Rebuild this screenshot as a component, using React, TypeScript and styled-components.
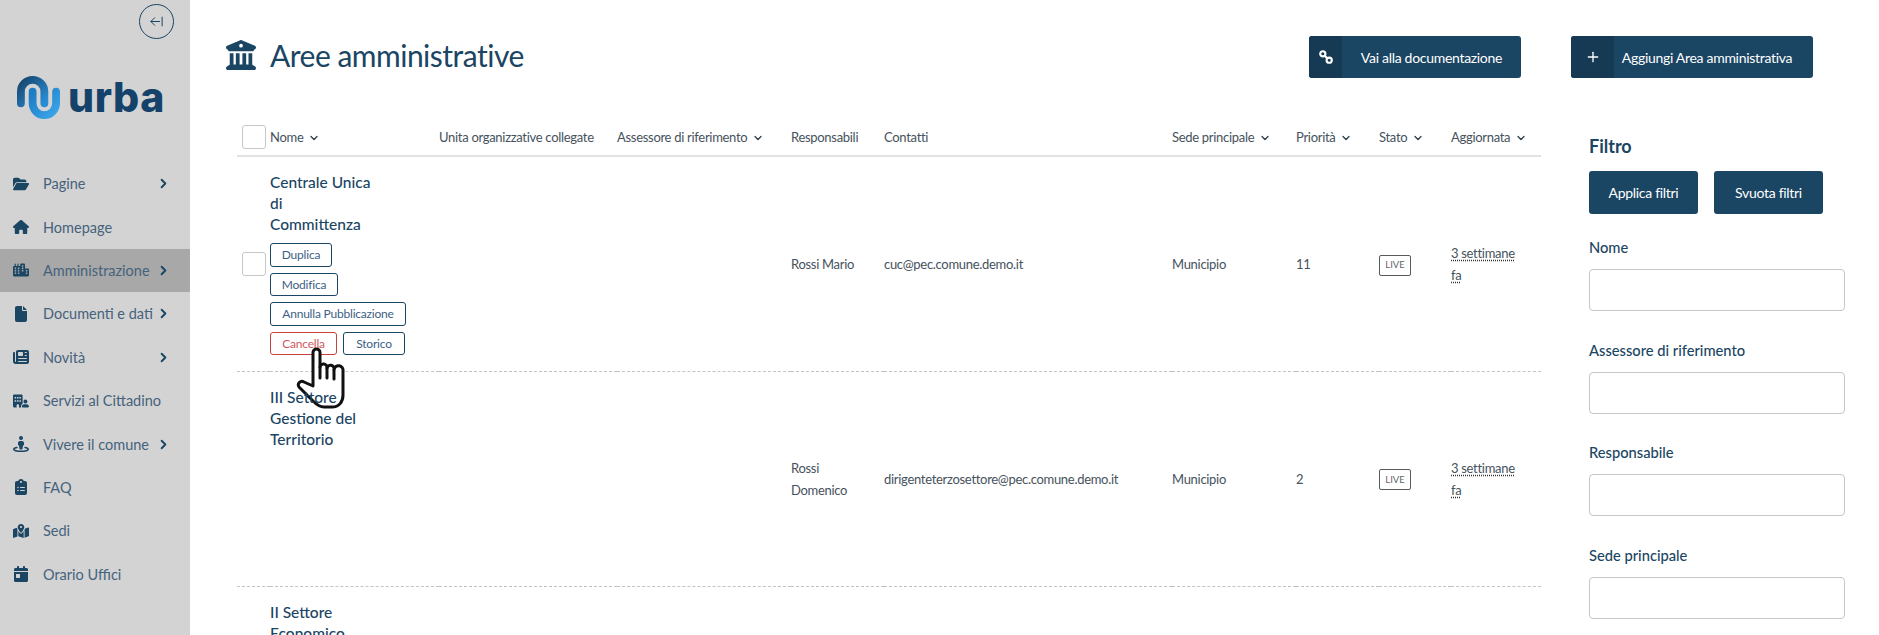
import React from "react";
import styled, { createGlobalStyle } from "styled-components";
import { ArrowLeftFromLine, ChevronDown, ChevronRight, Plus } from "lucide-react";
import {
  FaBuildingColumns,
  FaBuildingUser,
  FaCalendarDay,
  FaCity,
  FaClipboardList,
  FaFile,
  FaFolderOpen,
  FaHouse,
  FaMapLocationDot,
  FaNewspaper,
  FaStreetView,
} from "react-icons/fa6";

const NAVY = "#1a4563";
const DARK_NAVY = "#163a54";
const BODY_TEXT = "#46525c";

const GlobalStyle = createGlobalStyle`
  html, body {
    margin: 0;
    padding: 0;
    height: 635px;
    overflow: hidden;
    background: #fff;
    font-family: "Lato", "Open Sans", sans-serif;
  }
  * { box-sizing: border-box; }
`;

const Page = styled.div`
  display: flex;
  width: 1879px;
  height: 635px;
  overflow: hidden;
  position: relative;
`;

const Sidebar = styled.aside`
  width: 190px;
  flex: none;
  display: flex;
  flex-direction: column;
  background: #d3d3d3;
`;

const CollapseButton = styled.button`
  width: 35px;
  height: 35px;
  margin: 4px 16px 0 auto;
  padding: 0;
  display: flex;
  align-items: center;
  justify-content: center;
  background: transparent;
  border: 1px solid ${NAVY};
  border-radius: 50%;
  color: ${NAVY};
`;

const Logo = styled.div`
  display: flex;
  align-items: center;
  gap: 8px;
  margin: 37px 0 0 17px;
  height: 43px;
`;

const LogoText = styled.span`
  font-family: "Inter", sans-serif;
  font-size: 41px;
  font-weight: 800;
  color: #14426a;
  letter-spacing: 0.6px;
  line-height: 1;
`;

const Menu = styled.nav`
  margin-top: 43px;
  display: flex;
  flex-direction: column;
`;

const MenuItem = styled.a<{ $active?: boolean }>`
  height: 43.4px;
  display: flex;
  align-items: center;
  padding: 0 19px 0 13px;
  font-size: 14.5px;
  color: #45627c;
  background: ${(p) => (p.$active ? "#a8a8a8" : "transparent")};
`;

const MenuIcon = styled.span`
  width: 30px;
  flex: none;
  display: flex;
  color: ${NAVY};
  font-size: 16px;
`;

const MenuLabel = styled.span`
  flex: 1;
  white-space: nowrap;
`;

const MenuChevron = styled(ChevronRight)`
  color: ${NAVY};
`;

const Main = styled.main`
  flex: 1;
  min-width: 0;
  display: flex;
  flex-direction: column;
`;

const Header = styled.header`
  display: flex;
  align-items: center;
  height: 42px;
  margin-top: 36px;
  padding-left: 36px;
`;

const PageTitle = styled.h1`
  display: flex;
  align-items: center;
  gap: 14px;
  margin: 0;
  padding-bottom: 4px;
  font-size: 30px;
  font-weight: 400;
  letter-spacing: -0.5px;
  color: ${NAVY};
  flex: 1;
`;

const HeaderActions = styled.div`
  display: flex;
  gap: 50px;
  margin-right: 66px;
`;

const IconButton = styled.button`
  height: 42px;
  padding: 0;
  display: flex;
  align-items: stretch;
  background: ${NAVY};
  border: 0;
  border-radius: 3px;
  overflow: hidden;
  color: #fff;
  font: inherit;
  font-size: 14px;
  letter-spacing: -0.3px;
`;

const ButtonIcon = styled.span<{ $width: number }>`
  width: ${(p) => p.$width}px;
  display: flex;
  align-items: center;
  justify-content: center;
  background: ${DARK_NAVY};
`;

const ButtonLabel = styled.span<{ $width: number; $inset?: number }>`
  width: ${(p) => p.$width}px;
  padding-right: ${(p) => p.$inset ?? 0}px;
  display: flex;
  align-items: center;
  justify-content: center;
  white-space: nowrap;
`;

const Content = styled.div`
  display: flex;
  gap: 48px;
  padding-left: 47px;
  margin-top: 40px;
`;

const Table = styled.table`
  width: 1304px;
  flex: none;
  table-layout: fixed;
  border-collapse: collapse;
  font-size: 13px;
  letter-spacing: -0.3px;
  color: ${BODY_TEXT};
`;

const Col = styled.col<{ $width: number }>`
  width: ${(p) => p.$width}px;
`;

const Th = styled.th`
  height: 38px;
  padding: 0;
  font-weight: 400;
  text-align: left;
  white-space: nowrap;
  border-bottom: 2px solid #e2e2e2;
`;

const SortIcon = styled(ChevronDown)`
  margin-left: 5px;
  vertical-align: -2px;
  color: #2c3a44;
`;

const Row = styled.tr`
  height: 215px;
  border-bottom: 1px dashed #c4c4c4;
`;

const Td = styled.td<{ $inset?: number }>`
  padding: 0 ${(p) => p.$inset ?? 0}px 0 0;
  line-height: 22px;
`;

const NameCell = styled.td`
  padding: 15px 0 0;
  vertical-align: top;
`;

const CheckBox = styled.span`
  display: block;
  width: 24px;
  height: 24px;
  margin-left: 5px;
  background: #fff;
  border: 1px solid #c6c6c6;
  border-radius: 3px;
`;

/* sits above the hand cursor: the row title shows through it in the screenshot */
const AreaName = styled.div`
  position: relative;
  z-index: 2;
  width: 110px;
  font-size: 15.5px;
  font-weight: 500;
  letter-spacing: 0;
  line-height: 21px;
  color: ${NAVY};
`;

const Actions = styled.div`
  width: 135px;
  margin-top: 8px;
  display: flex;
  flex-wrap: wrap;
  gap: 6px;
`;

const ActionButton = styled.button<{ $danger?: boolean; $width: number }>`
  width: ${(p) => p.$width}px;
  height: 23.6px;
  flex: none;
  padding: 0;
  background: #fff;
  border: 1px solid ${(p) => (p.$danger ? "#c9403f" : NAVY)};
  border-radius: 3px;
  color: ${(p) => (p.$danger ? "#d0575d" : "#3e5f85")};
  font: inherit;
  font-size: 12px;
  letter-spacing: -0.2px;
  white-space: nowrap;
`;

const LiveBadge = styled.span`
  display: inline-flex;
  align-items: center;
  justify-content: center;
  width: 32px;
  height: 21px;
  border: 1px solid #5a5a5a;
  border-radius: 2px;
  font-size: 9.5px;
  letter-spacing: 0;
  color: #666;
`;

const TimeAgo = styled.abbr`
  text-decoration: underline dotted #333;
  text-underline-offset: 2px;
`;

const FilterPanel = styled.aside`
  width: 256px;
  flex: none;
  margin-top: 16px;
  color: ${NAVY};
`;

const FilterTitle = styled.h2`
  margin: 0;
  font-size: 18px;
  font-weight: 700;
  line-height: 24px;
`;

const FilterButtons = styled.div`
  display: flex;
  gap: 16px;
  margin-top: 13px;
`;

const FilterButton = styled.button`
  width: 109px;
  height: 43px;
  padding: 0;
  background: ${NAVY};
  border: 0;
  border-radius: 3px;
  color: #fff;
  font: inherit;
  font-size: 14px;
  letter-spacing: -0.3px;
`;

const Field = styled.label`
  display: block;
  margin-top: 24px;
  & + & {
    margin-top: 29.5px;
  }
`;

const FieldLabel = styled.span`
  display: block;
  font-size: 14.7px;
  font-weight: 500;
  line-height: 18px;
  margin-bottom: 13px;
`;

const FieldInput = styled.input`
  display: block;
  width: 256px;
  height: 42px;
  background: #fff;
  border: 1px solid #c6c6c6;
  border-radius: 4px;
`;

const HandCursor = styled.svg`
  position: absolute;
  z-index: 1;
  left: 296px;
  top: 347px;
`;

const UrbaMark = () => (
  <svg width="43" height="43" viewBox="0 -1 44 44" fill="none">
    <defs>
      <linearGradient id="urbaArch" x1="0" y1="0" x2="1" y2="1">
        <stop offset="0" stopColor="#17466f" />
        <stop offset="1" stopColor="#2a8ed6" />
      </linearGradient>
      <linearGradient id="urbaCup" x1="0" y1="0" x2="1" y2="1">
        <stop offset="0" stopColor="#1c7cc4" />
        <stop offset="1" stopColor="#3ba5ea" />
      </linearGradient>
    </defs>
    <path d="M4 27V15a12 12 0 0 1 24 0v12" stroke="url(#urbaArch)" strokeWidth="8" strokeLinecap="round" />
    <path d="M16 15v12a12 12 0 0 0 24 0V15" stroke="url(#urbaCup)" strokeWidth="8" strokeLinecap="round" />
  </svg>
);

const ChainIcon = () => (
  <svg width="14" height="14" viewBox="0 0 14 14" fill="none" stroke="#fff" strokeWidth="2.1">
    <circle cx="3.8" cy="3.8" r="2.6" />
    <circle cx="10.2" cy="10.2" r="2.6" />
    <path d="M5.6 5.6l2.8 2.8" />
  </svg>
);

const menuItems = [
  { label: "Pagine", icon: <FaFolderOpen />, more: true },
  { label: "Homepage", icon: <FaHouse /> },
  { label: "Amministrazione", icon: <FaCity />, more: true, active: true },
  { label: "Documenti e dati", icon: <FaFile />, more: true },
  { label: "Novità", icon: <FaNewspaper />, more: true },
  { label: "Servizi al Cittadino", icon: <FaBuildingUser /> },
  { label: "Vivere il comune", icon: <FaStreetView />, more: true },
  { label: "FAQ", icon: <FaClipboardList /> },
  { label: "Sedi", icon: <FaMapLocationDot /> },
  { label: "Orario Uffici", icon: <FaCalendarDay /> },
];

const columns = [33, 169, 178, 174, 93, 288, 124, 83, 72, 90];

const headings = [
  { label: "Nome", sort: true },
  { label: "Unita organizzative collegate" },
  { label: "Assessore di riferimento", sort: true },
  { label: "Responsabili" },
  { label: "Contatti" },
  { label: "Sede principale", sort: true },
  { label: "Priorità", sort: true },
  { label: "Stato", sort: true },
  { label: "Aggiornata", sort: true },
];

type Area = {
  name: string[];
  owner?: string;
  contact?: string;
  priority?: number;
  hovered?: boolean;
};

const areas: Area[] = [
  {
    name: ["Centrale Unica", "di", "Committenza"],
    owner: "Rossi Mario",
    contact: "cuc@pec.comune.demo.it",
    priority: 11,
    hovered: true,
  },
  {
    name: ["III Settore", "Gestione del", "Territorio"],
    owner: "Rossi Domenico",
    contact: "dirigenteterzosettore@pec.comune.demo.it",
    priority: 2,
  },
  {
    // the rest of this row is below the fold
    name: ["II Settore", "Economico"],
  },
];

const filters = ["Nome", "Assessore di riferimento", "Responsabile", "Sede principale"];

export default function App() {
  return (
    <Page>
      <GlobalStyle />
      <Sidebar>
        <CollapseButton>
          <ArrowLeftFromLine size={15} strokeWidth={1.6} />
        </CollapseButton>
        <Logo>
          <UrbaMark />
          <LogoText>urba</LogoText>
        </Logo>
        <Menu>
          {menuItems.map((item) => (
            <MenuItem key={item.label} $active={item.active}>
              <MenuIcon>{item.icon}</MenuIcon>
              <MenuLabel>{item.label}</MenuLabel>
              {item.more && <MenuChevron size={15} strokeWidth={3} />}
            </MenuItem>
          ))}
        </Menu>
      </Sidebar>
      <Main>
        <Header>
          <PageTitle>
            <FaBuildingColumns size={30} />
            Aree amministrative
          </PageTitle>
          <HeaderActions>
            <IconButton>
              <ButtonIcon $width={33}>
                <ChainIcon />
              </ButtonIcon>
              <ButtonLabel $width={179}>Vai alla documentazione</ButtonLabel>
            </IconButton>
            <IconButton>
              <ButtonIcon $width={43}>
                <Plus size={16} />
              </ButtonIcon>
              <ButtonLabel $width={199} $inset={13}>
                Aggiungi Area amministrativa
              </ButtonLabel>
            </IconButton>
          </HeaderActions>
        </Header>
        <Content>
          <Table>
            <colgroup>
              {columns.map((width, i) => (
                <Col key={i} $width={width} />
              ))}
            </colgroup>
            <thead>
              <tr>
                <Th>
                  <CheckBox />
                </Th>
                {headings.map((h) => (
                  <Th key={h.label}>
                    {h.label}
                    {h.sort && <SortIcon size={12} strokeWidth={2.5} />}
                  </Th>
                ))}
              </tr>
            </thead>
            <tbody>
              {areas.map((area) => (
                <Row key={area.name[0]}>
                  <Td>{area.hovered && <CheckBox />}</Td>
                  <NameCell colSpan={3}>
                    <AreaName>
                      {area.name.map((line) => (
                        <div key={line}>{line}</div>
                      ))}
                    </AreaName>
                    {area.hovered && (
                      <Actions>
                        <ActionButton $width={62}>Duplica</ActionButton>
                        <ActionButton $width={68}>Modifica</ActionButton>
                        <ActionButton $width={136}>Annulla Pubblicazione</ActionButton>
                        <ActionButton $danger $width={67}>
                          Cancella
                        </ActionButton>
                        <ActionButton $width={62}>Storico</ActionButton>
                      </Actions>
                    )}
                  </NameCell>
                  {area.owner ? (
                    <>
                      <Td $inset={12}>{area.owner}</Td>
                      <Td>{area.contact}</Td>
                      <Td>Municipio</Td>
                      <Td>{area.priority}</Td>
                      <Td>
                        <LiveBadge>LIVE</LiveBadge>
                      </Td>
                      <Td $inset={18}>
                        <TimeAgo>3 settimane fa</TimeAgo>
                      </Td>
                    </>
                  ) : (
                    <Td colSpan={6} />
                  )}
                </Row>
              ))}
            </tbody>
          </Table>
          <FilterPanel>
            <FilterTitle>Filtro</FilterTitle>
            <FilterButtons>
              <FilterButton>Applica filtri</FilterButton>
              <FilterButton>Svuota filtri</FilterButton>
            </FilterButtons>
            {filters.map((label) => (
              <Field key={label}>
                <FieldLabel>{label}</FieldLabel>
                <FieldInput />
              </Field>
            ))}
          </FilterPanel>
        </Content>
      </Main>
      <HandCursor width="52" height="64" viewBox="0 0 52 64" fill="none">
        <path
          d="M17 39V5.500a3.500 3.500 0 0 1 7 0V20a3.500 3.500 0 0 1 7 1a3.500 3.500 0 0 1 7 1.500a4.500 4.500 0 0 1 9 1.500v24c0 7-4 12-11 12H28c-5 0-8-3-11-6L3 40a3.600 3.600 0 0 1 5-5z"
          fill="#fff"
          stroke="#111"
          strokeWidth="3"
          strokeLinejoin="round"
        />
        <path d="M24 20v11M31 21v10M38 23v9" stroke="#111" strokeWidth="3" strokeLinecap="round" />
      </HandCursor>
    </Page>
  );
}
